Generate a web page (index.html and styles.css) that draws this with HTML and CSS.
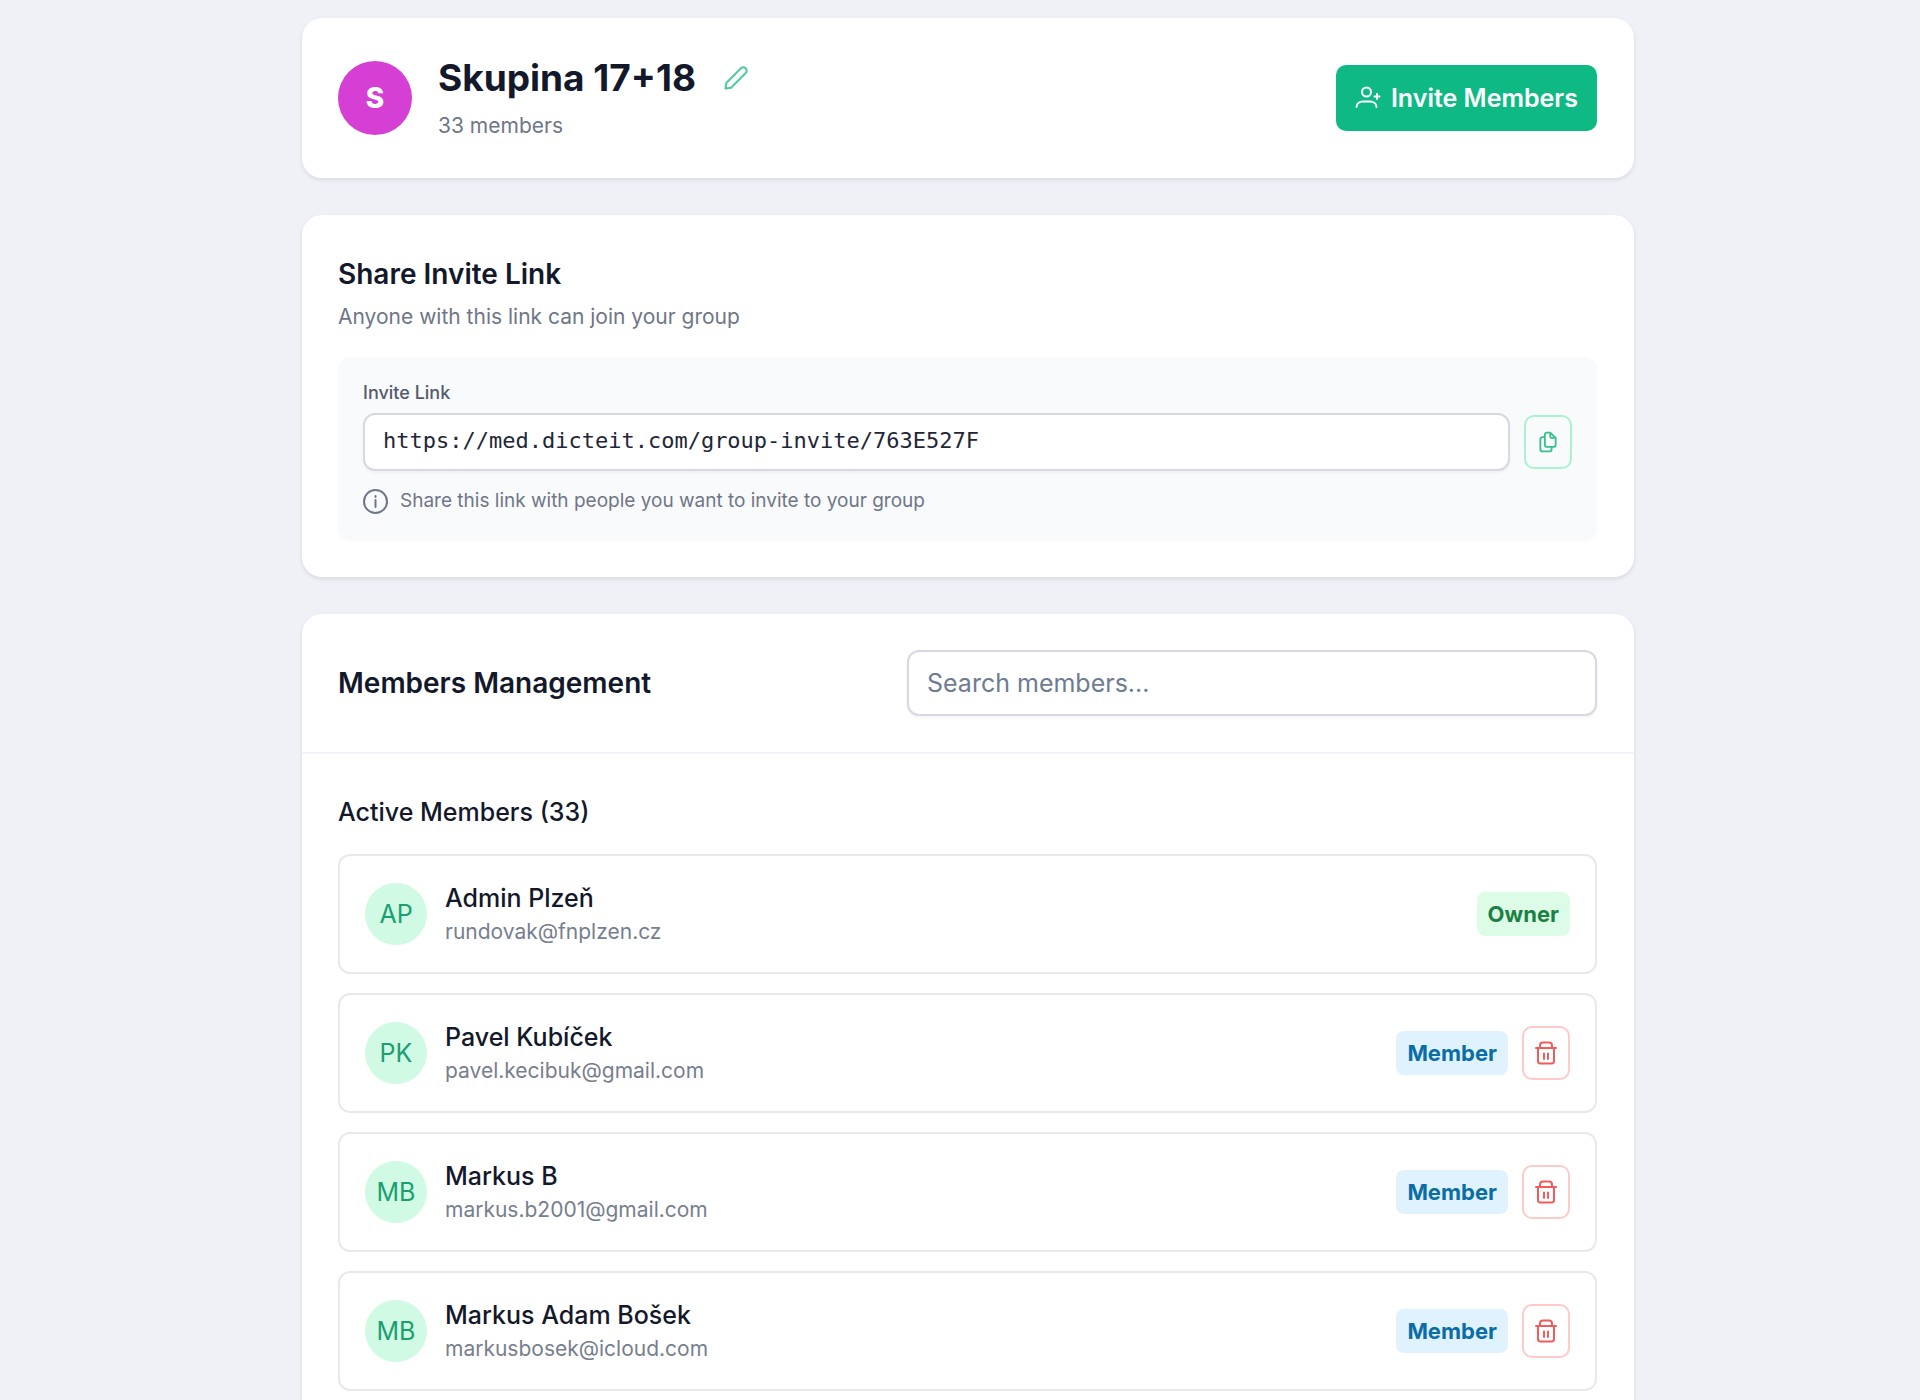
FILE: index.html
```html
<!DOCTYPE html>
<html lang="en">
<head>
<meta charset="utf-8">
<meta name="viewport" content="width=device-width, initial-scale=1">
<title>Skupina 17+18</title>
<link rel="stylesheet" href="styles.css">
</head>
<body>
<svg class="sprite" aria-hidden="true">
  <symbol id="icon-trash" viewBox="0 0 22 24">
    <path d="M1 7H21M3 7V20a2.500 2.500 0 0 0 2.500 2.500h11a2.500 2.500 0 0 0 2.500-2.500V7M5 7V4.500a3 3 0 0 1 3-3h6a3 3 0 0 1 3 3V7M9 12.500v5.500M13 12.500v5.500"/>
  </symbol>
</svg>
<main class="page">
  <section class="card group">
    <div class="group-avatar">S</div>
    <div class="group-info">
      <div class="title-row">
        <h1 class="title">Skupina 17+18</h1>
        <button class="edit" type="button" aria-label="Edit group name">
          <svg viewBox="0 0 24 24" class="icon"><path d="M1.500 22.500L2.300 17L17 2.300a3.300 3.300 0 0 1 4.700 4.700L7 21.700Z"/></svg>
        </button>
      </div>
      <p class="muted">33 members</p>
    </div>
    <button class="invite" type="button">
      <svg viewBox="0 0 26 24" class="icon invite-icon"><circle cx="11.500" cy="6" r="4.500"/><path d="M1.500 21c0-3.500 3-5.500 6.500-5.500h7c3.500 0 6.500 2 6.500 5.500M22 8v5M19.500 10.500h5"/></svg>
      Invite Members
    </button>
  </section>

  <section class="card share">
    <h2 class="heading">Share Invite Link</h2>
    <p class="muted share-note">Anyone with this link can join your group</p>
    <div class="link-box">
      <label class="label" for="invite-link">Invite Link</label>
      <div class="link-row">
        <input class="field link-field" id="invite-link" type="text" readonly value="https://med.dicteit.com/group-invite/763E527F">
        <button class="icon-button copy" type="button" aria-label="Copy link">
          <svg viewBox="0 0 20 24" class="icon copy-icon"><path d="M6.500 6.500H4A2.500 2.500 0 0 0 1.500 9v11A2.500 2.500 0 0 0 4 22.500h7.500A2.500 2.500 0 0 0 14 20v-2.500M12.500 1.500H9A2.500 2.500 0 0 0 6.500 4v11A2.500 2.500 0 0 0 9 17.500h7A2.500 2.500 0 0 0 18.500 15V7.500ZM12.500 1.500v4a2 2 0 0 0 2 2h4"/></svg>
        </button>
      </div>
      <p class="hint">
        <svg viewBox="0 0 25 25" class="icon info-icon"><circle cx="12.500" cy="12.500" r="11.500"/><path d="M12.500 11v7M12.500 7v1"/></svg>
        Share this link with people you want to invite to your group
      </p>
    </div>
  </section>

  <section class="card members">
    <header class="members-head">
      <h2 class="heading">Members Management</h2>
      <input class="field search" type="search" placeholder="Search members..." aria-label="Search members">
    </header>
    <div class="members-body">
      <h3 class="subheading">Active Members (33)</h3>
      <ul class="list">
        <li class="member">
          <span class="avatar">AP</span>
          <div class="person"><p class="name">Admin Plzeň</p><p class="email">rundovak@fnplzen.cz</p></div>
          <span class="badge owner">Owner</span>
        </li>
        <li class="member">
          <span class="avatar">PK</span>
          <div class="person"><p class="name">Pavel Kubíček</p><p class="email">pavel.kecibuk@gmail.com</p></div>
          <span class="badge">Member</span>
          <button class="icon-button remove" type="button" aria-label="Remove Pavel Kubíček"><svg class="icon trash-icon"><use href="#icon-trash"/></svg></button>
        </li>
        <li class="member">
          <span class="avatar">MB</span>
          <div class="person"><p class="name">Markus B</p><p class="email">markus.b2001@gmail.com</p></div>
          <span class="badge">Member</span>
          <button class="icon-button remove" type="button" aria-label="Remove Markus B"><svg class="icon trash-icon"><use href="#icon-trash"/></svg></button>
        </li>
        <li class="member">
          <span class="avatar">MB</span>
          <div class="person"><p class="name">Markus Adam Bošek</p><p class="email">markusbosek@icloud.com</p></div>
          <span class="badge">Member</span>
          <button class="icon-button remove" type="button" aria-label="Remove Markus Adam Bošek"><svg class="icon trash-icon"><use href="#icon-trash"/></svg></button>
        </li>
      </ul>
    </div>
  </section>
</main>
</body>
</html>
```

FILE: styles.css
```css
* { box-sizing: border-box; }

body, h1, h2, h3, p, ul { margin: 0; padding: 0; }

body {
  background: #f0f1f6;
  color: #13182b;
  font-family: Inter, sans-serif;
  font-size: 21px;
  line-height: 32px;
}

button, input { font: inherit; margin: 0; }

button { cursor: pointer; }

.sprite { display: none; }

.icon {
  display: block;
  flex: none;
  fill: none;
  stroke: currentColor;
  stroke-width: 2;
  stroke-linecap: round;
  stroke-linejoin: round;
}

/* The page scrolls inside its own area */
.page {
  height: 100vh;
  overflow-y: auto;
  scrollbar-width: none;
  display: flex;
  flex-direction: column;
  align-items: center;
  gap: 37px;
  padding: 18px 16px 37px 32px;
}

.card {
  flex: none;
  width: 100%;
  max-width: 1332px;
  background: #fff;
  border-radius: 20px;
  box-shadow: 0 2px 4px rgba(17, 24, 39, 0.1);
}

.muted { color: #6f7687; }

.heading { font-size: 28px; font-weight: 600; line-height: 40px; }

/* Group header */
.group {
  display: flex;
  align-items: center;
  padding: 36px 37px 36px 36px;
}

.group-avatar {
  display: grid;
  place-items: center;
  width: 74px;
  height: 74px;
  border-radius: 50%;
  background: #d63fd3;
  color: #fff;
  font-size: 28px;
  font-weight: 800;
}

.group-info { flex: 1; padding-left: 26px; }

.title-row { display: flex; align-items: center; gap: 28px; padding-bottom: 8px; }

.title { font-size: 37px; font-weight: 700; line-height: 48px; }

.edit { padding: 0; border: 0; background: none; color: #4fcb9a; }

.edit .icon { width: 24px; height: 24px; }

.invite {
  display: flex;
  align-items: center;
  gap: 10px;
  height: 66px;
  padding: 0 19px;
  border: 0;
  border-radius: 10px;
  background: #0eb983;
  color: #fff;
  font-size: 25px;
  font-weight: 600;
}

.invite-icon { width: 26px; height: 24px; }

/* Invite link */
.share { padding: 39px 37px 36px 36px; }

.share-note { margin-top: 7px; }

.link-box {
  margin-top: 24px;
  padding: 24px 25px;
  border-radius: 12px;
  background: #f9fafc;
}

.label {
  display: block;
  color: #535b6e;
  font-size: 18px;
  font-weight: 500;
  line-height: 24px;
}

.link-row { display: flex; align-items: center; gap: 14px; margin-top: 8px; }

.field {
  min-width: 0;
  border: 2px solid #d6d9e1;
  border-radius: 12px;
  background: #fff;
  box-shadow: 0 2px 3px rgba(17, 24, 39, 0.04);
  outline: 0;
}

.link-field {
  flex: 1;
  height: 58px;
  padding: 0 18px 4px;
  color: #1f2637;
  font-family: "DejaVu Sans Mono", monospace;
  font-size: 22px;
}

.icon-button {
  display: grid;
  place-items: center;
  width: 48px;
  height: 54px;
  padding: 0;
  border: 2px solid;
  border-radius: 10px;
  background: none;
}

.copy { border-color: #a9f3d0; color: #35c08c; }

.copy-icon { width: 18px; height: 22px; }

.hint {
  display: flex;
  align-items: center;
  gap: 12px;
  margin-top: 14px;
  color: #6f7687;
  font-size: 19px;
}

.info-icon { width: 25px; height: 25px; }

/* Members */
.members-head {
  display: flex;
  align-items: center;
  justify-content: space-between;
  padding: 36px 37px 36px 36px;
  border-bottom: 2px solid #f2f3f6;
}

.search {
  flex: 0 1 690px;
  height: 66px;
  padding: 0 18px;
  font-size: 25px;
}

.search::placeholder { color: #6e7c92; opacity: 1; }

.members-body { padding: 40px 37px 36px 36px; }

.subheading { font-size: 25px; font-weight: 500; line-height: 36px; }

.list {
  display: flex;
  flex-direction: column;
  gap: 19px;
  margin-top: 24px;
  list-style: none;
}

.member {
  display: flex;
  align-items: center;
  gap: 14px;
  height: 120px;
  padding: 0 25px;
  border: 2px solid #e7e9ee;
  border-radius: 12px;
}

.avatar {
  display: grid;
  place-items: center;
  width: 62px;
  height: 62px;
  border-radius: 50%;
  background: #d0fae4;
  color: #1a9f70;
  font-size: 25px;
}

.person { flex: 1; padding-left: 4px; }

.name { font-size: 25px; font-weight: 500; line-height: 36px; }

.email { color: #777e8e; }

.badge {
  padding: 6px 11px;
  border-radius: 8px;
  background: #dff2fe;
  color: #0b6da6;
  font-size: 22px;
  font-weight: 700;
}

.owner { background: #dcfce8; color: #1b8142; }

.remove { border-color: #fecaca; color: #f25b5b; }

.trash-icon { width: 22px; height: 24px; }
```
